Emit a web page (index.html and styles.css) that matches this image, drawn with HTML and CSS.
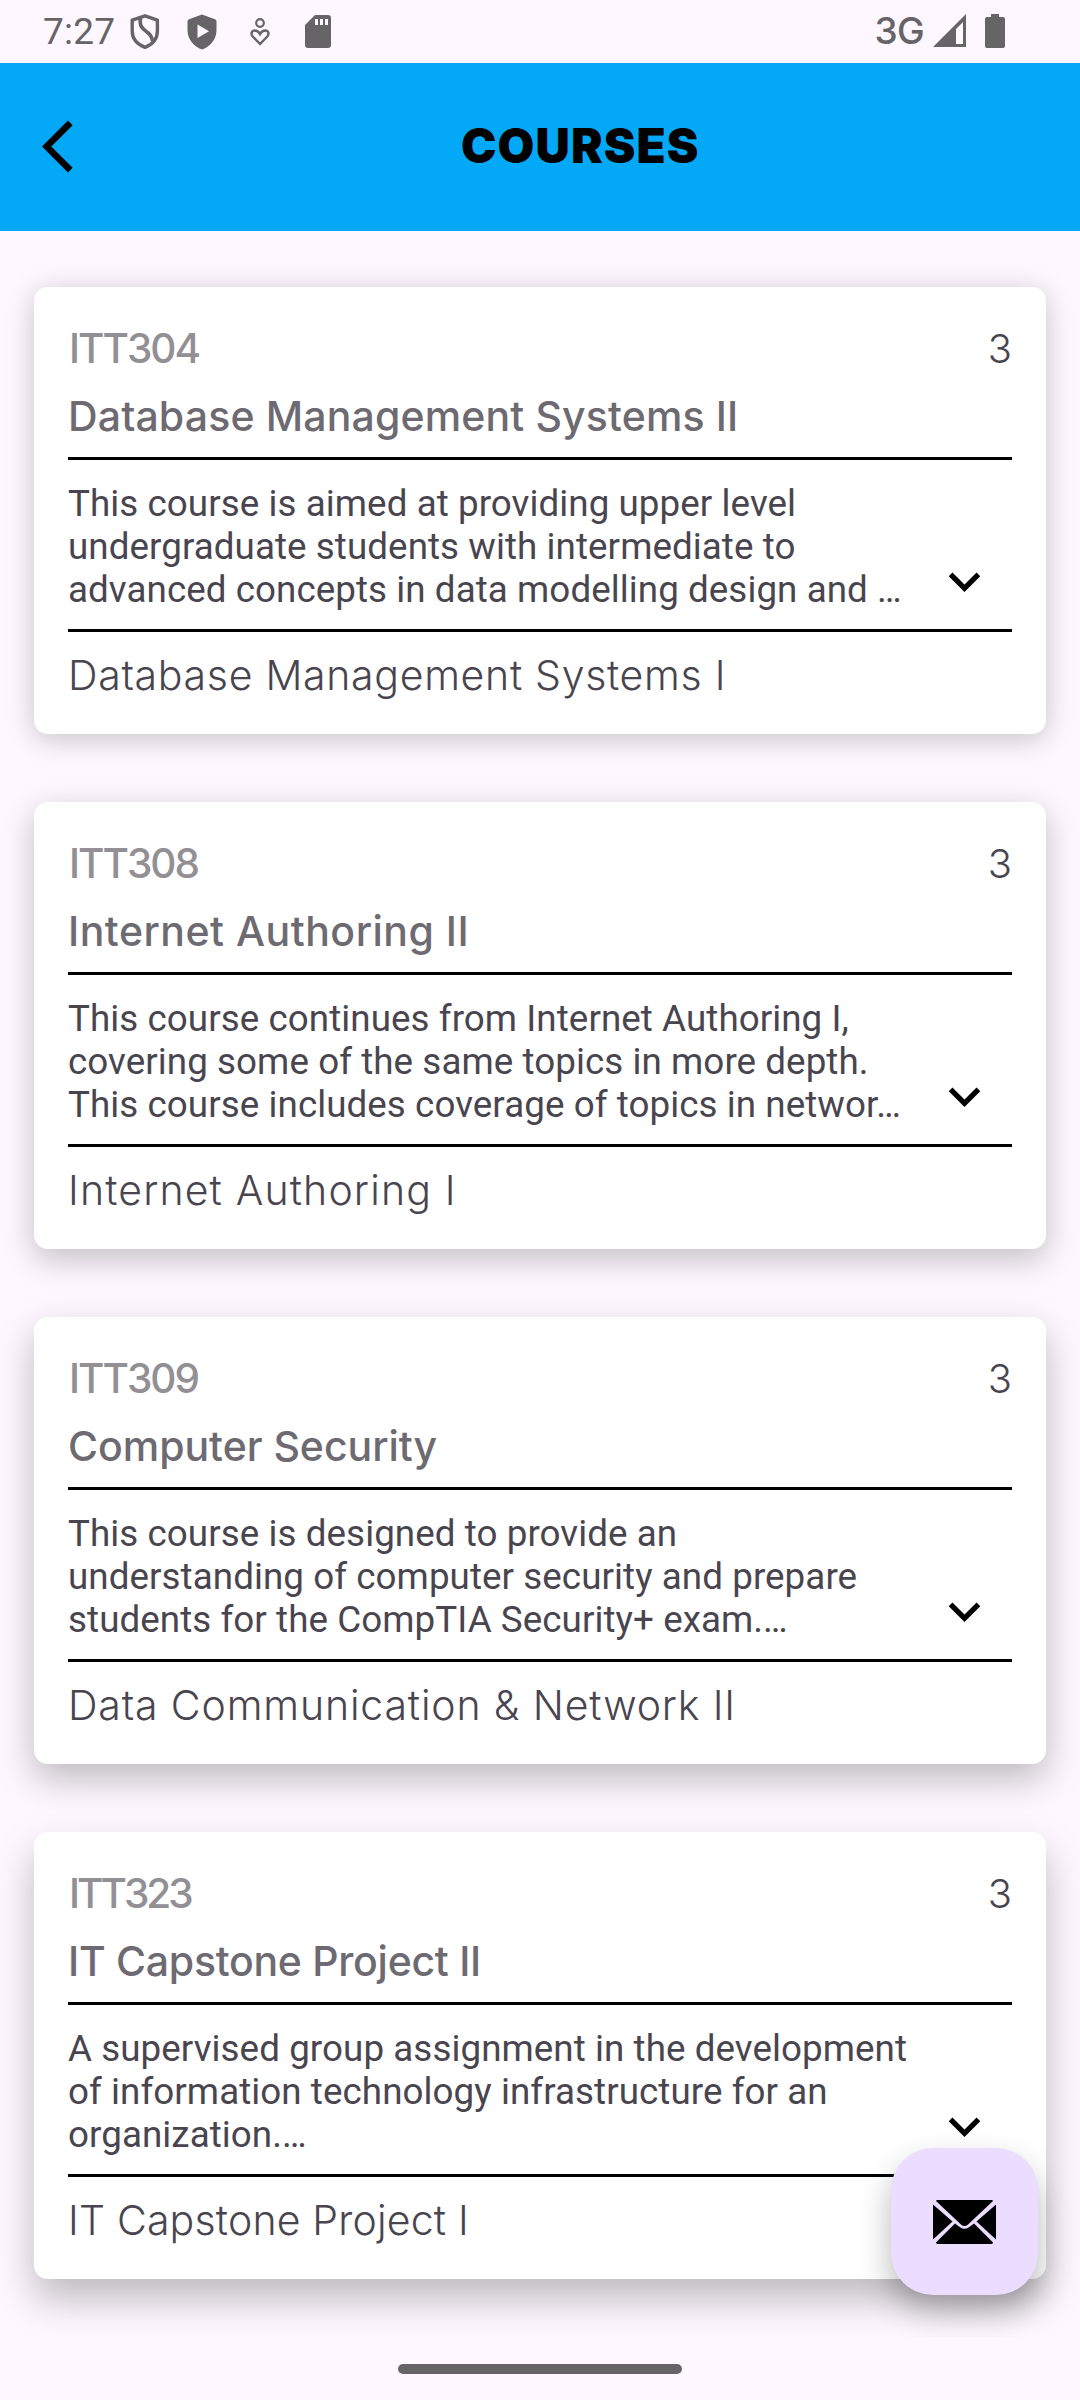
FILE: index.html
```
<!DOCTYPE html>
<html lang="en">
<head>
<meta charset="utf-8">
<title>Courses</title>
<link rel="stylesheet" href="styles.css">
</head>
<body>
<div class="screen">
  <div class="status-bar">
    <span class="time">7:27</span>
    <svg class="shield" viewBox="0 0 30 36" width="30" height="36">
      <path d="M15 1.8 27.4 6.2V17c0 8-5.4 13.6-12.4 16.4C8 30.600 2.200 25 2.200 17V6.200z" fill="none" stroke="#666467" stroke-width="3.4" stroke-linejoin="round"/>
      <path d="M10.500 4C9 12.500 13 15 17 18s5 5 5.500 9" fill="none" stroke="#666467" stroke-width="3.600"/>
    </svg>
    <svg class="shield-play" viewBox="0 0 30 36" width="30" height="36">
      <path d="M15 .5 28 5.200q1.500.6 1.500 2.200V16c0 9.500-6 16.200-14.500 19.600C6.500 32.200.5 25.500.5 16V7.400q0-1.600 1.500-2.200z" fill="#666467"/>
      <path d="M10.500 10.500v13.600L22 17.300z" fill="#fef7ff"/>
    </svg>
    <svg class="wellbeing" viewBox="0 0 20 28" width="20" height="28">
      <circle cx="10" cy="5" r="3.800" fill="none" stroke="#666467" stroke-width="2.200"/>
      <path d="M10 26 2.700 18.500C.5 16 1.500 12.500 4.800 12.500c2.400 0 4 1.500 5.200 3.600 1.200-2.100 2.800-3.600 5.200-3.600 3.300 0 4.300 3.500 2.100 6z" fill="none" stroke="#666467" stroke-width="2.400"/>
    </svg>
    <svg class="sd" viewBox="0 0 26 33" width="26" height="33">
      <path d="M10 0h13q3 0 3 3v27q0 3-3 3H3q-3 0-3-3V10z" fill="#666467"/>
      <path d="M10 4h3v6h-3zM15 4h3v6h-3zM20 4h3v6h-3z" fill="#fef7ff"/>
    </svg>
    <span class="network">3G</span>
    <svg class="signal" viewBox="0 0 33 33" width="33" height="33">
      <path d="M33 0v33H0zM30 8l-7 7v15h7z" fill="#666467" fill-rule="evenodd"/>
    </svg>
    <svg class="battery" viewBox="0 0 20 34" width="20" height="34">
      <path d="M6 0h8v3h4q2 0 2 2v27q0 2-2 2H2q-2 0-2-2V5q0-2 2-2h4z" fill="#666467"/>
    </svg>
  </div>

  <header class="app-bar">
    <svg class="back" viewBox="0 0 24 24" width="63" height="63"><path d="M11.670 3.870 9.900 2.100 0 12l9.900 9.900 1.770-1.770L3.540 12z"/></svg>
    <h1>COURSES</h1>
  </header>

  <main class="content">
    <article class="card lift-1">
      <div class="row"><span class="code">ITT304</span><span class="credits">3</span></div>
      <h2 class="t-database">Database Management Systems II</h2>
      <div class="details">
        <p>This course is aimed at providing upper level<br>undergraduate students with intermediate to<br>advanced concepts in data modelling design and …</p>
        <svg class="chevron" viewBox="0 0 24 24" width="63" height="63"><path d="M16.590 8.590 12 13.170 7.410 8.590 6 10l6 6 6-6z"/></svg>
      </div>
      <div class="prereq p-database">Database Management Systems I</div>
    </article>

    <article class="card lift-2">
      <div class="row"><span class="code">ITT308</span><span class="credits">3</span></div>
      <h2 class="t-internet">Internet Authoring II</h2>
      <div class="details">
        <p>This course continues from Internet Authoring I,<br>covering some of the same topics in more depth.<br>This course includes coverage of topics in networ…</p>
        <svg class="chevron" viewBox="0 0 24 24" width="63" height="63"><path d="M16.590 8.590 12 13.170 7.410 8.590 6 10l6 6 6-6z"/></svg>
      </div>
      <div class="prereq p-internet">Internet Authoring I</div>
    </article>

    <article class="card lift-3">
      <div class="row"><span class="code">ITT309</span><span class="credits">3</span></div>
      <h2 class="t-security">Computer Security</h2>
      <div class="details">
        <p>This course is designed to provide an<br>understanding of computer security and prepare<br>students for the CompTIA Security+ exam.…</p>
        <svg class="chevron" viewBox="0 0 24 24" width="63" height="63"><path d="M16.590 8.590 12 13.170 7.410 8.590 6 10l6 6 6-6z"/></svg>
      </div>
      <div class="prereq p-network">Data Communication &amp; Network II</div>
    </article>

    <article class="card lift-4">
      <div class="row"><span class="code code-tight">ITT323</span><span class="credits">3</span></div>
      <h2 class="t-capstone">IT Capstone Project II</h2>
      <div class="details">
        <p>A supervised group assignment in the development<br>of information technology infrastructure for an<br>organization.…</p>
        <svg class="chevron" viewBox="0 0 24 24" width="63" height="63"><path d="M16.590 8.590 12 13.170 7.410 8.590 6 10l6 6 6-6z"/></svg>
      </div>
      <div class="prereq p-capstone">IT Capstone Project I</div>
    </article>

    <div class="fab">
      <svg viewBox="0 0 63 44" width="63" height="44">
        <path d="M4.500 0h54q1.500 0 1.500 1L35 24.500q-3.500 3-7 0L3 1q0-1 1.500-1z"/>
        <path d="M0 4.500 19.500 21.500 0 39.500z"/>
        <path d="M63 4.500 43.500 21.500 63 39.500z"/>
        <path d="M22 23.500 27 27.200q4.500 3 9 0L41 23.500 60 42.500q0 1.500-2 1.500H5q-2 0-2-1.500z"/>
      </svg>
    </div>
  </main>

  <div class="nav-bar"><div class="handle"></div></div>
</div>
</body>
</html>
```
FILE: styles.css
```
* { box-sizing: border-box; }
body { margin: 0; background: #fef7ff; }
svg { display: block; flex: none; }

.screen {
  width: 1080px;
  height: 2400px;
  display: flex;
  flex-direction: column;
  overflow: hidden;
}

/* Status bar */
.status-bar {
  height: 63px;
  flex: none;
  display: flex;
  align-items: flex-start;
  padding: 0 75px 0 43px;
  color: #666467;
}
.time { width: 87px; margin-top: 10px; font: 400 37px/43px Roboto, sans-serif; letter-spacing: .2px; white-space: nowrap; }
.shield { margin-top: 13.500px; }
.shield-play { margin: 13.500px 0 0 27px; }
.wellbeing { margin: 17.500px 0 0 33px; }
.sd { margin: 15px 0 0 35px; }
.network { margin: 9px 9px 0 auto; font: 500 37px/43px Inter, sans-serif; letter-spacing: -.7px; }
.signal { margin-top: 14px; }
.battery { margin: 14px 0 0 19px; }

/* App bar */
.app-bar {
  height: 168px;
  flex: none;
  display: flex;
  align-items: center;
  padding: 0 0 2px 42px;
  background: #03a9f7;
}
.app-bar h1 {
  margin: 0 0 0 356px;
  font: 900 47.500px/56px Inter, sans-serif;
  letter-spacing: 1.100px;
  color: #000;
}

/* Course list */
.content {
  position: relative;
  flex: 1;
  display: flex;
  flex-direction: column;
  gap: 68px;
  padding: 56px 34px 0;
  overflow: hidden;
}
.card {
  height: 447px;
  flex: none;
  padding: 37px 34px 34px;
  border-radius: 14px;
  background: #fff;
}
.lift-1 { box-shadow: 0 5px 28px rgba(0, 0, 0, .22); }
.lift-2 { box-shadow: 0 10px 32px rgba(0, 0, 0, .24); }
.lift-3 { box-shadow: 0 15px 36px rgba(0, 0, 0, .25); }
.lift-4 { box-shadow: 0 20px 38px rgba(0, 0, 0, .25); }

.row { display: flex; justify-content: space-between; height: 49px; }
.code { padding-left: 1px; font: 500 40.500px/49px Inter, sans-serif; letter-spacing: -2px; color: #929094; }
.code-tight { letter-spacing: -3px; }
.credits { font: 300 40px/49px Inter, sans-serif; color: #49454f; }
.card h2 {
  margin: 19px 0 16px;
  font: 500 41px/49px Inter, sans-serif;
  color: #6d6a72;
  white-space: nowrap;
}
.details {
  display: flex;
  justify-content: space-between;
  align-items: flex-end;
  height: 175px;
  padding: 22px 16px 18px 0;
  border-top: 3px solid #000;
  border-bottom: 3px solid #000;
}
.details p {
  margin: 0;
  font: 400 36.75px/43px Roboto, sans-serif;
  letter-spacing: .07px;
  color: #49454f;
  white-space: nowrap;
}
.chevron { margin-bottom: -2px; }
.prereq {
  margin-top: 19px;
  font: 300 41px/49px Inter, sans-serif;
  color: #49454f;
  white-space: nowrap;
}

/* Tracking per course name */
.card .t-database { letter-spacing: .14px; }
.card .t-internet { letter-spacing: .5px; }
.card .t-security { letter-spacing: -.03px; }
.card .t-capstone { letter-spacing: -.28px; }
.p-database { letter-spacing: .7px; }
.p-internet { letter-spacing: 1.150px; }
.p-network { letter-spacing: .85px; }
.p-capstone { letter-spacing: .18px; }

/* Mail button floating over the list */
.fab {
  position: absolute;
  right: 42px;
  bottom: 42px;
  width: 147px;
  height: 147px;
  display: flex;
  align-items: center;
  justify-content: center;
  border-radius: 42px;
  background: #eaddff;
  box-shadow: 0 16px 32px rgba(0, 0, 0, .28);
}

/* Gesture bar */
.nav-bar { height: 63px; flex: none; display: flex; justify-content: center; padding-top: 27px; }
.handle { width: 284px; height: 10px; border-radius: 5px; background: #666467; }
```
